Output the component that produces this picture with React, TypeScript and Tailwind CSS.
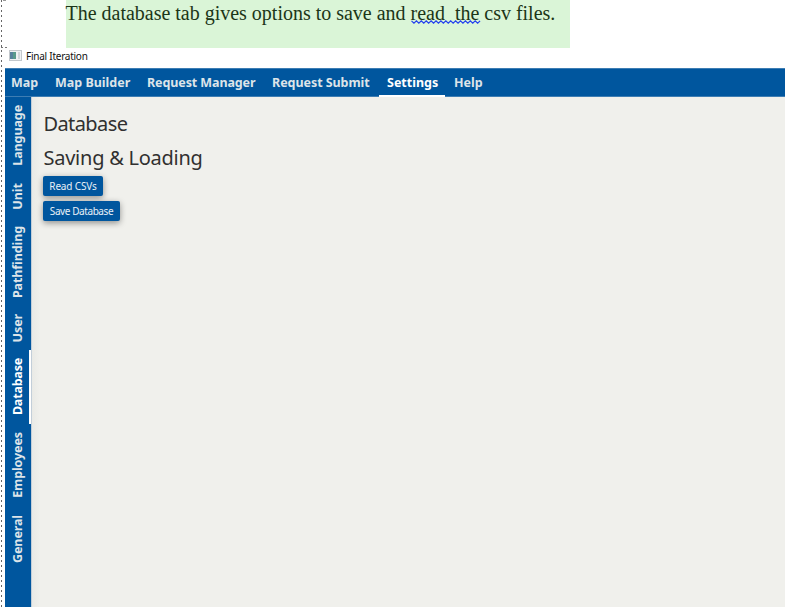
type Tab = { label: string; size: string; active?: boolean };

const topTabs: Tab[] = [
  { label: 'Map', size: 'w-[42px] pl-[6px]' },
  { label: 'Map Builder', size: 'w-[92px] pl-[8px]' },
  { label: 'Request Manager', size: 'w-[125px] pl-[8px] tracking-[-0.1px]' },
  { label: 'Request Submit', size: 'w-[115px] pl-[8px] tracking-[-0.05px]' },
  { label: 'Settings', size: 'w-[66px] pl-[8px]', active: true },
  { label: 'Help', size: 'w-[46px] pl-[9px]' },
];

const sideTabs: Tab[] = [
  { label: 'Language', size: 'h-[77px] tracking-[-0.1px]' },
  { label: 'Unit', size: 'h-[44px]' },
  { label: 'Pathfinding', size: 'h-[89px] tracking-[-0.1px]' },
  { label: 'User', size: 'h-[43px] tracking-[-0.1px]' },
  { label: 'Database', size: 'h-[74px] tracking-[-0.2px]', active: true },
  { label: 'Employees', size: 'h-[82px] tracking-[-0.1px]' },
  { label: 'General', size: 'h-[65px] tracking-[-0.1px]' },
];

function WindowIcon() {
  return (
    <svg width="13" height="11" viewBox="0 0 13 11" className="shrink-0">
      <rect x="0.5" y="0.5" width="12" height="10" fill="#eef1f3" stroke="#c3c8cc" />
      <rect x="1" y="2" width="6" height="7" fill="#579a8b" />
      <rect x="1" y="2" width="3" height="7" fill="#55819c" />
      <rect x="9" y="2" width="2" height="7" fill="#d0d6da" />
    </svg>
  );
}

function Squiggle() {
  const points = Array.from({ length: 29 }, (_, i) => `${i * 2.45 + 0.5},${i % 2 ? 3.2 : 0.9}`).join(' ');
  return (
    <svg width="70" height="4" className="absolute left-0 top-[19px]">
      <polyline points={points} fill="none" stroke="#2440ee" strokeWidth="1.2" />
    </svg>
  );
}

export default function App() {
  return (
    <div className="relative flex h-[607px] w-[790px] flex-col overflow-hidden bg-white pl-[5px] pr-[5px] font-['Noto_Sans',sans-serif]">
      <div className="absolute left-[1px] top-0 h-full w-px bg-[repeating-linear-gradient(to_bottom,#666_0px,#666_2px,transparent_2px,transparent_5px)]" />
      <div className="absolute left-[1px] top-[47px] h-px w-[7px] bg-[repeating-linear-gradient(to_right,#777_0px,#777_2px,transparent_2px,transparent_4px)]" />
      <div className="absolute left-[3px] top-0 h-px w-[3px] bg-[#999]" />

      <div className="ml-[60.5px] h-[48px] w-[504px] shrink-0 bg-[#daf5d7]">
        <p className="whitespace-pre pt-px font-['Liberation_Serif',serif] text-[20px] leading-[24px] tracking-[-0.01px] text-[#1c3518]">
          The database tab gives options to save and{' '}
          <span className="relative inline-block">
            {'read  the'}
            <Squiggle />
          </span>
          {' csv files.'}
        </p>
      </div>

      <div className="flex h-[20px] shrink-0 items-center gap-[4px] pb-[6px] pl-[4px] text-[10px] leading-none tracking-[-0.25px] text-[#111]">
        <WindowIcon />
        <span className="pt-[2px]">Final Iteration</span>
      </div>

      <nav className="flex h-[29px] shrink-0 border-y border-[#3d7db3] bg-[#00569e] text-[12.5px] font-bold leading-[28px]">
        {topTabs.map((tab) => (
          <div
            key={tab.label}
            className={`${tab.size} relative shrink-0 whitespace-nowrap ${tab.active ? 'text-white' : 'text-[#dde4e9]'}`}
          >
            {tab.label}
            {tab.active && <span className="absolute -bottom-px left-0 h-[2px] w-full bg-white" />}
          </div>
        ))}
      </nav>

      <div className="flex min-h-0 grow">
        <aside className="flex w-[27px] shrink-0 flex-col border-r border-[#c2ced9] bg-[#00569e] text-[12.5px] font-bold">
          {sideTabs.map((tab) => (
            <div
              key={tab.label}
              className={`${tab.size} flex shrink-0 items-center justify-end border-r-2 pr-[2px] ${tab.active ? 'border-white text-white' : 'border-transparent text-[#dde4e9]'}`}
            >
              <span className="rotate-180 whitespace-nowrap leading-[18px] [writing-mode:vertical-rl]">{tab.label}</span>
            </div>
          ))}
        </aside>
        <main className="flex grow flex-col items-start bg-[linear-gradient(to_right,#e9eae6,#f0f0ec_8px)] pl-[11px] pt-[11px] text-[#303030]">
          <h1 className="h-[33px] pl-[0.5px] text-[20px] leading-[32px] tracking-[-0.6px]">Database</h1>
          <h2 className="h-[35px] pl-[0.5px] text-[20px] leading-[34px] tracking-[-0.25px]">Saving &amp; Loading</h2>
          <button className="h-[20px] w-[60px] whitespace-nowrap rounded-[2px] bg-[#00569e] text-[10px] leading-[20px] tracking-[-0.15px] text-[#e8f0f7] shadow-[0_2px_6px_rgba(0,0,0,0.4)]">
            Read CSVs
          </button>
          <button className="mt-[5px] h-[20px] w-[77px] whitespace-nowrap rounded-[2px] bg-[#00569e] text-[10px] leading-[20px] tracking-[-0.42px] text-[#e8f0f7] shadow-[0_2px_6px_rgba(0,0,0,0.4)]">
            Save Database
          </button>
        </main>
      </div>
    </div>
  );
}
